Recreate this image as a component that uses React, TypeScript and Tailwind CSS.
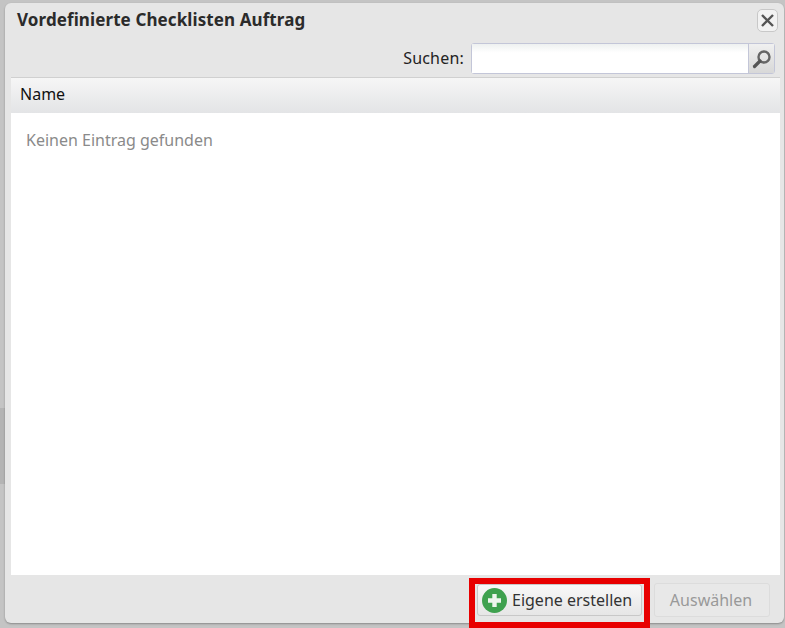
export default function App() {
  return (
    <div className="relative h-[628px] w-[785px] overflow-hidden bg-[#c4c4c4] pb-[5px] pl-[5px] pr-[1px] pt-[3px] font-['Noto_Sans',sans-serif]">
      <div className="absolute left-0 top-[408px] h-[76px] w-[5px] bg-[#b4b4b4]" />
      <div className="relative flex h-full flex-col rounded-[6px] bg-[#e6e6e6] pl-[6px] pr-[4px] shadow-[0_1px_2px_rgba(0,0,0,0.3)]">
        <div className="flex h-[40px] shrink-0 items-start justify-between pl-[6px]">
          <span className="mt-[4px] text-[17px] font-bold leading-[26px] tracking-[0.1px] text-[#2b2b2b]">Vordefinierte Checklisten Auftrag</span>
          <button className="mr-[2px] mt-[6px] flex h-[23px] w-[21px] items-center justify-center rounded-[5px] border border-[#c8c8c8] bg-[#f2f2f2]">
            <svg width="15" height="15" viewBox="0 0 15 15" fill="none" stroke="#555" strokeWidth="2.4">
              <path d="M2 2l11 11M13 2L2 13" />
            </svg>
          </button>
        </div>
        <div className="flex h-[34px] shrink-0 items-start justify-end pr-[5px]">
          <span className="mr-[7px] mt-[5px] text-[16px] leading-[20px] tracking-[0.2px] text-[#222]">Suchen:</span>
          <div className="flex h-[31px] w-[304px] rounded-[3px] border border-[#c3c6d8] bg-white">
            <div className="flex-1 bg-gradient-to-b from-[#eef1f0] to-white to-[30%]" />
            <div className="flex w-[26px] items-center justify-center border-l border-[#c3c6d8] bg-gradient-to-b from-[#f0f0f0] to-[#d8d8d8]">
              <svg width="22" height="22" viewBox="0 0 22 22" fill="none">
                <circle cx="13" cy="9" r="5.5" stroke="#666" strokeWidth="2.4" />
                <path d="M9 13l-5.5 5.5" stroke="#555" strokeWidth="3.2" strokeLinecap="round" />
              </svg>
            </div>
          </div>
        </div>
        <div className="flex h-[36px] shrink-0 items-start border-t-[1px] border-[#d0d0d0] bg-gradient-to-b from-[#f6f6f6] to-[#e3e4e6] pl-[9px] pt-[4px] text-[16px] leading-[24px] text-[#111]">
          Name
        </div>
        <div className="flex-1 bg-white pl-[15px] pt-[15px] text-[16px] leading-[24px] text-[#8a8a8a]">
          Keinen Eintrag gefunden
        </div>
        <div className="flex h-[48px] shrink-0 items-start justify-end pr-[10px] pt-[8px]">
          <button className="mr-[12px] mt-[1px] flex h-[32px] w-[165px] items-center gap-[5px] rounded-[3px] border border-[#c8c8c8] bg-gradient-to-b from-[#f8f8f8] to-[#e6e6e6] pl-[4px] text-[16px] text-[#333]">
            <svg width="25" height="25" viewBox="0 0 25 25">
              <circle cx="12.5" cy="12.5" r="12.5" fill="#3fa14f" />
              <path d="M12.5 6v13M6 12.5h13" stroke="#eef5ee" strokeWidth="4.4" />
            </svg>
            Eigene erstellen
          </button>
          <button className="flex h-[34px] w-[116px] items-center justify-center rounded-[3px] pr-[2px] border border-[#dcdcdc] bg-[#e8e8e8] text-[16px] text-[#999]">
            Auswählen
          </button>
        </div>
      </div>
      <div className="absolute left-[469px] top-[578px] h-[50px] w-[181px] border-[6px] border-[#e80000]" />
    </div>
  );
}
